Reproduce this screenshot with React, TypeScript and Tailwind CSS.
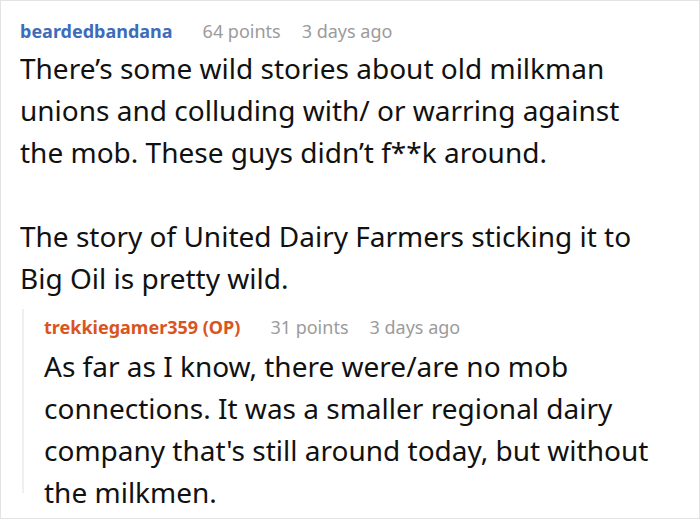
import React from 'react';

const Meta: React.FC<{ name: string; color: string; points: string; ago: string }> = ({ name, color, points, ago }) => (
    <div className="flex items-baseline text-[18px] leading-[24px] whitespace-nowrap">
        <span className={`font-bold ${color}`}>{name}</span>
        <span className="ml-[30px] text-[#9b9b9b]">{points}</span>
        <span className="ml-[21px] text-[#9b9b9b]">{ago}</span>
    </div>
);

export default function App() {
    return (
        <div className="w-[700px] h-[519px] border border-[#e3e3e3] bg-white overflow-hidden" style={{ fontFamily: '"Noto Sans", "Open Sans", sans-serif' }}>
            <div className="pl-[19px] pt-[18px]">
                <Meta name="beardedbandana" color="text-[#3d6cba]" points="64 points" ago="3 days ago" />
                <div className="text-[28px] leading-[42px] text-[#111] mt-[4px] whitespace-nowrap">
                    <p>There’s some wild stories about old milkman<br />unions and colluding with/ or warring against<br />the mob. These guys didn’t f**k around.</p>
                    <p className="mt-[42px]">The story of United Dairy Farmers sticking it to<br />Big Oil is pretty wild.</p>
                </div>
            </div>
            <div className="ml-[21px] mt-[10px] border-l-2 border-[#efefef] pl-[20px] pt-[6px] h-[184px]">
                <Meta name="trekkiegamer359 (OP)" color="text-[#d9541e]" points="31 points" ago="3 days ago" />
                <div className="text-[28px] leading-[42px] text-[#111] mt-[6px] whitespace-nowrap">
                    As far as I know, there were/are no mob<br />connections. It was a smaller regional dairy<br />company that's still around today, but without<br />the milkmen.
                </div>
            </div>
        </div>
    );
}
